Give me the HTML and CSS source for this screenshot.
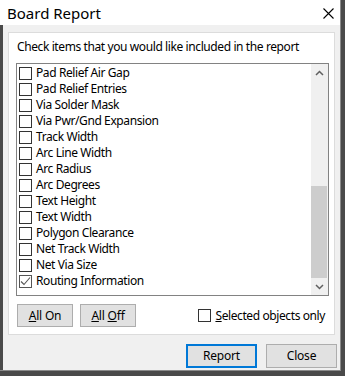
FILE: index.html
```html
<!DOCTYPE html>
<html>
<head>
<meta charset="utf-8">
<link rel="stylesheet" href="styles.css">
</head>
<body>
<div class="window">
  <div class="titlebar">
    <span class="title">Board Report</span>
    <svg class="close-x" width="11" height="11" viewBox="0 0 11 11"><path d="M0.5 0.5 L10.5 10.5 M10.5 0.5 L0.5 10.5" stroke="#000" stroke-width="1.1" fill="none"/></svg>
  </div>
  <div class="client">
    <div class="panel">
      <div class="caption">Check items that you would like included in the report</div>
      <div class="listbox">
        <div class="items">
          <div class="row"><span class="cb"></span><span class="label">Pad Relief Air Gap</span></div>
          <div class="row"><span class="cb"></span><span class="label">Pad Relief Entries</span></div>
          <div class="row"><span class="cb"></span><span class="label">Via Solder Mask</span></div>
          <div class="row"><span class="cb"></span><span class="label">Via Pwr/Gnd Expansion</span></div>
          <div class="row"><span class="cb"></span><span class="label">Track Width</span></div>
          <div class="row"><span class="cb"></span><span class="label">Arc Line Width</span></div>
          <div class="row"><span class="cb"></span><span class="label">Arc Radius</span></div>
          <div class="row"><span class="cb"></span><span class="label">Arc Degrees</span></div>
          <div class="row"><span class="cb"></span><span class="label">Text Height</span></div>
          <div class="row"><span class="cb"></span><span class="label">Text Width</span></div>
          <div class="row"><span class="cb"></span><span class="label">Polygon Clearance</span></div>
          <div class="row"><span class="cb"></span><span class="label">Net Track Width</span></div>
          <div class="row"><span class="cb"></span><span class="label">Net Via Size</span></div>
          <div class="row"><span class="cb checked"><svg width="11" height="11" viewBox="0 0 11 11"><path d="M1 5.5 L4 8.5 L10 1.5" stroke="#555" stroke-width="1.1" fill="none"/></svg></span><span class="label">Routing Information</span></div>
        </div>
        <div class="scrollbar">
          <div class="sb-btn"><svg width="9" height="6" viewBox="0 0 9 6"><path d="M1 5 L4.5 1.5 L8 5" stroke="#606060" stroke-width="1.5" fill="none"/></svg></div>
          <div class="sb-track"><div class="sb-thumb"></div></div>
          <div class="sb-btn"><svg width="9" height="6" viewBox="0 0 9 6"><path d="M1 1 L4.5 4.5 L8 1" stroke="#606060" stroke-width="1.5" fill="none"/></svg></div>
        </div>
      </div>
      <div class="panel-actions">
        <button class="btn small"><u>A</u>ll On</button>
        <button class="btn small"><u>A</u>ll <u>O</u>ff</button>
        <label class="sel"><span class="cb"></span><span class="label"><u>S</u>elected objects only</span></label>
      </div>
    </div>
    <div class="footer">
      <button class="btn wide default">Report</button>
      <button class="btn wide">Close</button>
    </div>
  </div>
</div>
</body>
</html>
```

FILE: styles.css
```css
* { box-sizing: border-box; }
html, body { margin: 0; padding: 0; }
body {
  background: #4a4a4a;
  width: 345px;
  height: 376px;
  overflow: hidden;
  font-family: "Noto Sans", "Open Sans", sans-serif;
  font-size: 12px;
  letter-spacing: -0.4px;
  color: #000;
}
.window {
  width: 341px;
  height: 371px;
  background: #f0f0f0;
  border-right: 1px solid #8a8a8a;
  border-bottom: 1px solid #8a8a8a;
  display: flex;
  flex-direction: column;
}
.titlebar {
  height: 25px;
  background: #fff;
  display: flex;
  align-items: center;
  justify-content: space-between;
  padding: 0 6px 0 7px;
  flex: none;
}
.title {
  font-size: 15px;
  line-height: 20px;
  letter-spacing: 0;
  margin-top: 1px;
}
.close-x { margin-top: 1px; }
.client {
  flex: 1;
  border-left: 3px solid #4a4a4a;
  padding: 7px 0 0 5px;
  display: flex;
  flex-direction: column;
}
.panel {
  width: 327px;
  height: 303px;
  background: #fff;
  border: 1px solid #dcdcdc;
  padding: 0 0 0 7px;
  display: flex;
  flex-direction: column;
}
.caption {
  height: 30px;
  line-height: 16px;
  padding: 6px 0 0 1px;
}
.listbox {
  width: 313px;
  height: 233px;
  border: 1px solid #828282;
  display: flex;
}
.items {
  flex: 1;
  padding: 1px 0 0 2px;
}
.row {
  height: 16px;
  display: flex;
  align-items: center;
  white-space: nowrap;
}
.cb {
  width: 13px;
  height: 13px;
  border: 1px solid #333;
  background: #fff;
  flex: none;
  display: flex;
  align-items: center;
  justify-content: center;
}
.cb.checked { border-color: #555; }
.label { margin-left: 4px; line-height: 16px; }
.scrollbar {
  width: 17px;
  background: #f0f0f0;
  display: flex;
  flex-direction: column;
}
.sb-btn {
  height: 17px;
  display: flex;
  align-items: center;
  justify-content: center;
  flex: none;
}
.sb-track {
  flex: 1;
  display: flex;
  flex-direction: column;
  justify-content: flex-end;
}
.sb-thumb {
  height: 92px;
  margin: 0 1px 0 0;
  background: #cdcdcd;
}
.panel-actions {
  display: flex;
  align-items: center;
  padding: 8px 0 0 1px;
}
.btn {
  font-family: inherit;
  font-size: 12px;
  letter-spacing: -0.2px;
  color: #000;
  background: #e1e1e1;
  border: 1px solid #adadad;
  border-radius: 0;
  padding: 0;
  margin: 0;
  height: 23px;
  line-height: 16px;
}
.btn.small { width: 56px; margin-right: 7px; }
.sel {
  margin-left: auto;
  margin-right: 9px;
  display: flex;
  align-items: center;
}
.sel .label { margin-left: 4px; }
.footer {
  display: flex;
  justify-content: flex-end;
  gap: 9px;
  padding: 9px 3px 0 0;
}
.btn.wide { width: 71px; height: 24px; }
.btn.default { border: 2px solid #0078d7; }
```
